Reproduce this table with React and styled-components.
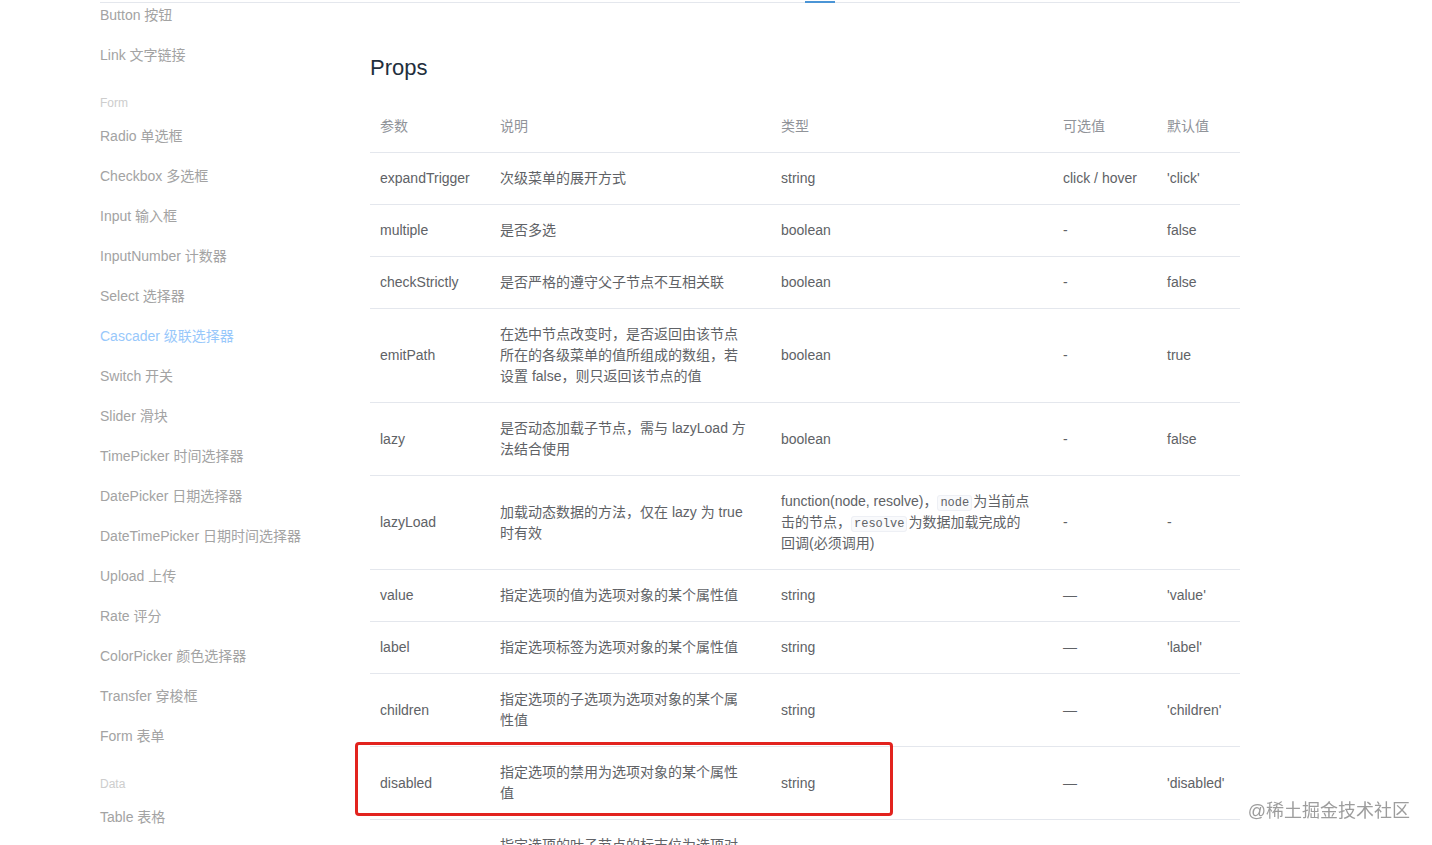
import React from "react";
import styled, { createGlobalStyle } from "styled-components";

const GlobalStyle = createGlobalStyle`
  html, body {
    margin: 0;
    padding: 0;
    background: #fff;
    overflow: hidden;
  }
  body {
    font-family: "Liberation Sans", "Noto Sans CJK SC", sans-serif;
    font-size: 14px;
    color: #606266;
  }
`;

const Page = styled.div`
  width: 1140px;
  margin-left: 100px;
`;

const TopBar = styled.div`
  display: flex;
  align-items: flex-start;
  height: 2px;
  border-bottom: 1px solid #e4e7ed;
`;

const ActiveBar = styled.div`
  margin-left: 705px;
  margin-top: 1px;
  width: 30px;
  height: 2px;
  background: #4b95d6;
`;

const Layout = styled.div`
  display: flex;
`;

const Sidebar = styled.nav`
  width: 270px;
  flex-shrink: 0;
  margin-top: -8px;
`;

const NavItem = styled.div`
  height: 40px;
  line-height: 40px;
  font-size: 14px;
  color: ${(p) => (p.$active ? "#98c8fb" : "#a3a3a3")};
  white-space: nowrap;
`;

const GroupLabel = styled.div`
  margin-top: 15px;
  height: 26px;
  line-height: 26px;
  font-size: 12px;
  color: #cdcdcd;
`;

const Main = styled.main`
  width: 870px;
`;

const Title = styled.h3`
  margin: 48px 0 17px;
  font-size: 22px;
  line-height: 33px;
  font-weight: 400;
  color: #1f2f3d;
`;

const Table = styled.table`
  width: 100%;
  border-collapse: collapse;
  table-layout: fixed;
  font-size: 14px;
  line-height: 21px;
`;

const Th = styled.th`
  text-align: left;
  font-weight: 400;
  color: #909399;
  padding: 15px;
  border-bottom: 1px solid #e4e7ed;
  white-space: nowrap;
  &:first-child {
    padding-left: 10px;
  }
`;

const Td = styled.td`
  position: relative;
  padding: 15px;
  border-bottom: 1px solid #e4e7ed;
  color: #606266;
  vertical-align: middle;
  word-break: break-word;
  &:first-child {
    padding-left: 10px;
  }
  &:last-child {
    padding-right: 5px;
  }
`;

const Code = styled.code`
  font-family: "Liberation Mono", monospace;
  font-size: 12px;
  line-height: 16px;
  background: #f9fafc;
  border: 1px solid #eef0f5;
  border-radius: 3px;
  padding: 0 2px;
  margin: 0 1px 0 0;
`;

const Highlight = styled.span`
  position: absolute;
  left: -15px;
  top: -5px;
  width: 538px;
  height: 74px;
  box-sizing: border-box;
  border: 3px solid #e2231e;
  border-radius: 4px;
  pointer-events: none;
`;

const Watermark = styled.div`
  position: fixed;
  right: 22px;
  bottom: 22px;
  font-size: 18px;
  line-height: 24px;
  color: rgba(140, 140, 140, 0.85);
  text-shadow: 0 0 2px #fff, 0 0 2px #fff;
`;

const navGroups = [
  { label: null, items: ["Button 按钮", "Link 文字链接"] },
  {
    label: "Form",
    items: [
      "Radio 单选框",
      "Checkbox 多选框",
      "Input 输入框",
      "InputNumber 计数器",
      "Select 选择器",
      "Cascader 级联选择器",
      "Switch 开关",
      "Slider 滑块",
      "TimePicker 时间选择器",
      "DatePicker 日期选择器",
      "DateTimePicker 日期时间选择器",
      "Upload 上传",
      "Rate 评分",
      "ColorPicker 颜色选择器",
      "Transfer 穿梭框",
      "Form 表单",
    ],
  },
  { label: "Data", items: ["Table 表格"] },
];

const rows = [
  ["expandTrigger", "次级菜单的展开方式", "string", "click / hover", "'click'"],
  ["multiple", "是否多选", "boolean", "-", "false"],
  ["checkStrictly", "是否严格的遵守父子节点不互相关联", "boolean", "-", "false"],
  [
    "emitPath",
    "在选中节点改变时，是否返回由该节点所在的各级菜单的值所组成的数组，若设置 false，则只返回该节点的值",
    "boolean",
    "-",
    "true",
  ],
  ["lazy", "是否动态加载子节点，需与 lazyLoad 方法结合使用", "boolean", "-", "false"],
  [
    "lazyLoad",
    "加载动态数据的方法，仅在 lazy 为 true 时有效",
    <>
      function(node, resolve)，<Code>node</Code>为当前点击的节点，<Code>resolve</Code>为数据加载完成的回调(必须调用)
    </>,
    "-",
    "-",
  ],
  ["value", "指定选项的值为选项对象的某个属性值", "string", "—", "'value'"],
  ["label", "指定选项标签为选项对象的某个属性值", "string", "—", "'label'"],
  ["children", "指定选项的子选项为选项对象的某个属性值", "string", "—", "'children'"],
  ["disabled", "指定选项的禁用为选项对象的某个属性值", "string", "—", "'disabled'"],
  ["leaf", "指定选项的叶子节点的标志位为选项对象的某个属性值", "string", "—", "'leaf'"],
];

const App = () => {
  return (
    <>
      <GlobalStyle />
      <Page>
        <TopBar>
          <ActiveBar />
        </TopBar>
        <Layout>
          <Sidebar>
            {navGroups.map((group, gi) => (
              <div key={gi}>
                {group.label && <GroupLabel>{group.label}</GroupLabel>}
                {group.items.map((item) => (
                  <NavItem key={item} $active={item.startsWith("Cascader")}>
                    {item}
                  </NavItem>
                ))}
              </div>
            ))}
          </Sidebar>
          <Main>
            <Title>Props</Title>
            <Table>
              <colgroup>
                <col style={{ width: 115 }} />
                <col style={{ width: 281 }} />
                <col style={{ width: 282 }} />
                <col style={{ width: 104 }} />
                <col style={{ width: 88 }} />
              </colgroup>
              <thead>
                <tr>
                  <Th>参数</Th>
                  <Th>说明</Th>
                  <Th>类型</Th>
                  <Th>可选值</Th>
                  <Th>默认值</Th>
                </tr>
              </thead>
              <tbody>
                {rows.map((row) => (
                  <tr key={row[0]}>
                    {row.map((cell, ci) => (
                      <Td key={ci}>
                        {ci === 0 && row[0] === "disabled" && <Highlight />}
                        {cell}
                      </Td>
                    ))}
                  </tr>
                ))}
              </tbody>
            </Table>
          </Main>
        </Layout>
      </Page>
      <Watermark>@稀土掘金技术社区</Watermark>
    </>
  );
};

export default App;
